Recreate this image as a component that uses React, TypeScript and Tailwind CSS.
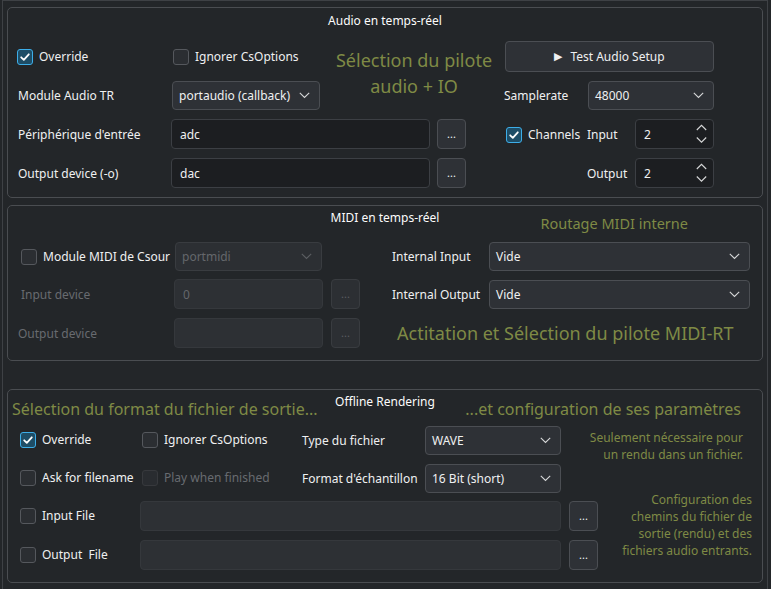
import React from 'react';

const olive = 'text-[#7f8a45]';

const Check: React.FC<{ checked?: boolean; disabled?: boolean }> = ({ checked = false, disabled = false }) => (
  <span
    className={`w-4 h-4 rounded-[3px] border flex items-center justify-center shrink-0 ${
      checked
        ? 'border-[#3daee9] bg-[#1e4d66]'
        : disabled
        ? 'border-[#37393d] bg-[#292c30]'
        : 'border-[#55585d] bg-[#2b2e32]'
    }`}
  >
    {checked && (
      <svg width="12" height="12" viewBox="0 0 12 12">
        <polyline points="2.2,6.3 4.8,8.8 9.8,3.3" fill="none" stroke="#fcfcfc" strokeWidth="1.8" strokeLinecap="round" strokeLinejoin="round" />
      </svg>
    )}
  </span>
);

const CheckLabel: React.FC<{ label: string; checked?: boolean; disabled?: boolean; className?: string }> = ({
  label,
  checked,
  disabled,
  className = '',
}) => (
  <div className={`flex items-center gap-[6px] ${className}`}>
    <Check checked={checked} disabled={disabled} />
    <span className={`whitespace-pre ${disabled ? 'text-[#686b70]' : ''}`}>{label}</span>
  </div>
);

const Chevron: React.FC<{ dim?: boolean }> = ({ dim }) => (
  <svg width="11" height="7" viewBox="0 0 11 7">
    <polyline points="0.8,0.8 5.5,5.5 10.2,0.8" fill="none" stroke={dim ? '#5b5e62' : '#d6d7d8'} strokeWidth="1.1" />
  </svg>
);

const Combo: React.FC<{ value: string; className?: string; disabled?: boolean }> = ({ value, className = '', disabled }) => (
  <div
    className={`h-[29px] rounded-[4px] border flex items-center justify-between pl-[6px] pr-[9px] ${
      disabled ? 'border-[#393c40] bg-[#2c2f33] text-[#64676b]' : 'border-[#4b4e53] bg-[#2e3136]'
    } ${className}`}
  >
    <span className="pt-[2px]">{value}</span>
    <Chevron dim={disabled} />
  </div>
);

const LineEdit: React.FC<{ value?: string; className?: string; disabled?: boolean }> = ({ value = '', className = '', disabled }) => (
  <div
    className={`h-[30px] rounded-[4px] border flex items-center px-[8px] pt-[2px] ${
      disabled ? 'border-[#35383c] bg-[#2d3034] text-[#64676b]' : 'border-[#3c3f44] bg-[#1c1e21]'
    } ${className}`}
  >
    {value}
  </div>
);

const Dots: React.FC<{ disabled?: boolean }> = ({ disabled }) => (
  <div
    className={`w-[29px] h-[30px] rounded-[4px] border flex items-center justify-center text-[11px] ${
      disabled ? 'border-[#393c40] bg-[#2c2f33] text-[#5b5e62]' : 'border-[#4b4e53] bg-[#2e3136]'
    }`}
  >
    ...
  </div>
);

const Spin: React.FC<{ value: string }> = ({ value }) => (
  <div className="w-[79px] h-[30px] rounded-[4px] border border-[#3c3f44] bg-[#1c1e21] flex items-center justify-between pl-[8px] pr-[6px]">
    <span className="pt-[2px]">{value}</span>
    <svg width="11" height="20" viewBox="0 0 11 20">
      <polyline points="0.8,6 5.5,1.3 10.2,6" fill="none" stroke="#d6d7d8" strokeWidth="1.1" />
      <polyline points="0.8,13.5 5.5,18.2 10.2,13.5" fill="none" stroke="#d6d7d8" strokeWidth="1.1" />
    </svg>
  </div>
);

export default function App() {
  return (
    <div className="w-[771px] h-[589px] bg-[#232629] text-[#eff0f1] text-[12px] overflow-hidden" style={{ fontFamily: '"Noto Sans", sans-serif' }}>
      <div className="ml-[2px] w-[766px] h-full border-l border-r border-t border-[#3e4145] pt-[6px]">
        {/* Audio en temps-réel */}
        <div className="ml-[4px] w-[756px] h-[191px] rounded-[5px] border border-[#4a4d51]">
          <div className="h-[26px] flex items-center justify-center text-[#fcfcfc]">Audio en temps-réel</div>
          <div className="mt-[7px] flex pl-[9px]">
            <div className="flex flex-col">
              <div className="flex">
                <div className="flex flex-col w-[310px]">
                  <div className="h-[31px] flex items-center">
                    <CheckLabel label="Override" checked className="w-[156px]" />
                    <CheckLabel label="Ignorer CsOptions" />
                  </div>
                  <div className="mt-[8px] h-[30px] flex items-center">
                    <span className="w-[155px] pl-[1px] pt-[2px]">Module Audio TR</span>
                    <Combo value="portaudio (callback)" className="w-[148px]" />
                  </div>
                </div>
                <div className={`w-[174px] flex flex-col items-center justify-center pb-[5px] text-[18px] leading-[26px] ${olive}`}>
                  <span>Sélection du pilote</span>
                  <span>audio + IO</span>
                </div>
              </div>
              <div className="mt-[9px] h-[30px] flex items-center">
                <span className="w-[154px] pl-[1px] pt-[2px]">Périphérique d'entrée</span>
                <LineEdit value="adc" className="w-[259px]" />
                <div className="ml-[7px]"><Dots /></div>
              </div>
              <div className="mt-[9px] h-[30px] flex items-center">
                <span className="w-[154px] pl-[1px] pt-[2px]">Output device (-o)</span>
                <LineEdit value="dac" className="w-[259px]" />
                <div className="ml-[7px]"><Dots /></div>
              </div>
            </div>
            <div className="ml-[4px] w-[209px] flex flex-col">
              <div className="h-[31px] rounded-[4px] border border-[#4b4e53] bg-[#2e3136] flex items-center justify-center gap-[8px]">
                <span className="text-[11px]">▶</span>
                <span>Test Audio Setup</span>
              </div>
              <div className="mt-[8px] h-[30px] flex items-center -ml-[1px]">
                <span className="w-[84px] pt-[2px]">Samplerate</span>
                <Combo value="48000" className="w-[126px]" />
              </div>
              <div className="mt-[9px] h-[30px] flex items-center">
                <CheckLabel label="Channels" checked className="w-[82px] pl-[1px] pt-[1px]" />
                <span className="w-[48px] pt-[2px]">Input</span>
                <Spin value="2" />
              </div>
              <div className="mt-[9px] h-[30px] flex items-center pl-[82px]">
                <span className="w-[48px] pt-[2px]">Output</span>
                <Spin value="2" />
              </div>
            </div>
          </div>
        </div>

        {/* MIDI en temps-réel */}
        <div className="mt-[7px] ml-[4px] w-[756px] h-[156px] rounded-[5px] border border-[#4a4d51]">
          <div className="h-[35px] grid grid-cols-[1fr_auto_1fr]">
            <div />
            <div className="h-[24px] flex items-center text-[#fcfcfc]">MIDI en temps-réel</div>
            <div className={`justify-self-end mr-[74px] mt-[8px] h-[20px] flex items-center text-[14.5px] ${olive}`}>Routage MIDI interne</div>
          </div>
          <div className="flex pl-[10px]">
            <div className="w-[343px] flex flex-col">
              <div className="h-[30px] flex items-center">
                <CheckLabel label="Module MIDI de Csour" className="w-[157px] pl-[3px] pt-[1px]" />
                <Combo value="portmidi" disabled className="w-[147px]" />
              </div>
              <div className="mt-[8px] h-[30px] flex items-center">
                <span className="w-[156px] pl-[3px] pt-[2px] text-[#686b70]">Input device</span>
                <LineEdit value="0" disabled className="w-[149px]" />
                <div className="ml-[8px]"><Dots disabled /></div>
              </div>
              <div className="mt-[9px] h-[30px] flex items-center">
                <span className="w-[156px] pt-[2px] text-[#686b70]">Output device</span>
                <LineEdit disabled className="w-[149px]" />
                <div className="ml-[8px]"><Dots disabled /></div>
              </div>
            </div>
            <div className="ml-[31px] flex flex-col">
              <div className="h-[30px] flex items-center">
                <span className="w-[97px] pt-[2px]">Internal Input</span>
                <Combo value="Vide" className="w-[261px]" />
              </div>
              <div className="mt-[8px] h-[30px] flex items-center">
                <span className="w-[97px] pt-[2px]">Internal Output</span>
                <Combo value="Vide" className="w-[261px]" />
              </div>
              <div className={`mt-[9px] h-[30px] flex items-center ml-[5px] text-[18px] whitespace-nowrap ${olive}`}>
                Actitation et Sélection du pilote MIDI-RT
              </div>
            </div>
          </div>
        </div>

        {/* Offline Rendering */}
        <div className="mt-[28px] ml-[4px] w-[756px] h-[194px] rounded-[5px] border border-[#4a4d51]">
          <div className="h-[35px] grid grid-cols-[1fr_auto_1fr]">
            <div className={`ml-[4px] mt-[8px] h-[22px] flex items-center text-[16px] whitespace-nowrap ${olive}`}>
              Sélection du format du fichier de sortie...
            </div>
            <div className="h-[24px] flex items-center text-[#fcfcfc]">Offline Rendering</div>
            <div className={`justify-self-end mr-[21px] mt-[8px] h-[22px] flex items-center text-[16px] whitespace-nowrap ${olive}`}>
              ...et configuration de ses paramètres
            </div>
          </div>
          <div className="flex pl-[12px]">
            <div className="w-[579px] shrink-0 flex flex-col">
              <div className="h-[30px] flex items-center">
                <CheckLabel label="Override" checked className="w-[122px]" />
                <CheckLabel label="Ignorer CsOptions" className="w-[160px]" />
                <span className="w-[123px] pt-[2px]">Type du fichier</span>
                <Combo value="WAVE" className="w-[136px]" />
              </div>
              <div className="mt-[8px] h-[30px] flex items-center">
                <CheckLabel label="Ask for filename" className="w-[122px]" />
                <CheckLabel label="Play when finished" disabled className="w-[160px]" />
                <span className="w-[123px] pt-[2px]">Format d'échantillon</span>
                <Combo value="16 Bit (short)" className="w-[136px]" />
              </div>
              <div className="mt-[8px] h-[30px] flex items-center">
                <CheckLabel label="Input File" className="w-[120px]" />
                <LineEdit disabled className="w-[421px]" />
                <div className="ml-[8px]"><Dots /></div>
              </div>
              <div className="mt-[9px] h-[30px] flex items-center">
                <CheckLabel label="Output  File" className="w-[120px]" />
                <LineEdit disabled className="w-[421px]" />
                <div className="ml-[8px]"><Dots /></div>
              </div>
            </div>
            <div className={`-ml-[20px] flex-1 flex flex-col items-end whitespace-nowrap text-right leading-[17px] ${olive}`}>
              <div className="mt-[4px] mr-[19px]">
                Seulement nécessaire pour
                <br />
                un rendu dans un fichier.
              </div>
              <div className="mt-[28px] mr-[10px]">
                Configuration des
                <br />
                chemins du fichier de
                <br />
                sortie (rendu) et des
                <br />
                fichiers audio entrants.
              </div>
            </div>
          </div>
        </div>
      </div>
    </div>
  );
}
